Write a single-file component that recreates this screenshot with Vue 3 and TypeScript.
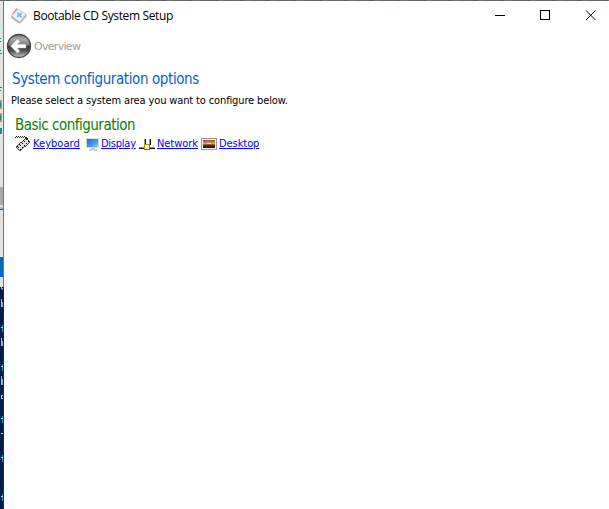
<script setup lang="ts">
interface Area { id: string; label: string }

const areas: Area[] = [
  { id: 'keyboard', label: 'Keyboard' },
  { id: 'display', label: 'Display' },
  { id: 'network', label: 'Network' },
  { id: 'desktop', label: 'Desktop' },
]
const diagonals = [0, 2, 4, 6, 8]
const consoleMarks = [329, 368, 420, 459, 498]
</script>

<template>
  <div class="screen">
    <div class="top-strip"></div>
    <div class="body">
      <svg class="backdrop" viewBox="0 0 4 508" width="4" height="508" shape-rendering="crispEdges">
        <rect width="4" height="508" fill="#e4e4e2" />
        <path d="M0 23h1v5H0z" fill="#b5eeee" />
        <path d="M0 37h1v1H0zM0 40h1v1H0zM0 49h1v1H0zM0 52h2v1H0zM0 86h2v1H0zM0 89h1v1H0z" fill="#16894c" />
        <path d="M0 99h2v9H0zM0 112h2v9H0z" fill="#c99342" />
        <path d="M0 101h1v5H0zM0 114h1v5H0zM0 127h1v6H0z" fill="#168c96" />
        <path d="M1 127h1v6H1z" fill="#397fa0" />
        <rect y="186" width="4" height="18" fill="#aaa9a7" />
        <rect y="206" width="4" height="2" fill="#9bbddb" />
        <rect y="208" width="4" height="1" fill="#304d79" />
        <rect y="256" width="4" height="20" fill="#0867ba" />
        <rect y="286" width="4" height="222" fill="#001c4b" />
        <path d="M1 286h1v2H1zM1 298h1v8H1zM1 337h1v8H1zM1 375h1v9H1z" fill="#e2ac82" />
        <path d="M2 287h1v2H2zM2 301h1v5H2zM2 340h1v5H2zM2 378h1v6H2z" fill="#8baac5" />
        <path d="M1 394h2v1H1zM1 397h2v1H1zM1 432h2v1H1z" fill="#bbcdf0" />
        <rect x="1" y="394" width="1" height="4" fill="#d9c9b3" />
        <g v-for="y in consoleMarks" :key="y">
          <rect x="2" :y="y - 5" width="1" height="7" fill="#149bc0" />
          <rect x="1" :y="y - 3" width="2" height="1" fill="#9edcec" />
          <rect x="3" :y="y + 1" width="1" height="1" fill="#2884b0" />
        </g>
        <rect x="3" width="1" height="286" fill="#747474" />
        <rect x="3" y="286" width="1" height="222" fill="#182b4b" />
      </svg>

      <main class="window">
        <header class="titlebar">
          <svg class="app-icon" width="18" height="18" viewBox="0 0 18 18">
            <path d="M1 10 6 2.5 16 7l1 2-7 7.5-2-.5-7-5z" fill="#b5b5b5" />
            <path d="M1.5 8.5 6.5 1.5 16 7l-6.5 8z" fill="#f4f4f4" stroke="#c6c6c6" stroke-width=".8" />
            <path d="m2 7 4-5.2 2 .5-5 5.5z" fill="#cc9b8b" />
            <path d="m7.5 5.5 4 5M11.8 6 7 10" stroke="#62c4f3" stroke-width="1.7" />
          </svg>
          <h1 class="title">Bootable CD System Setup</h1>
          <svg class="controls" width="138" height="29" viewBox="0 0 138 29" fill="none" stroke="#000">
            <path d="M24 14.5h10" />
            <rect x="69.5" y="9.5" width="9" height="9" />
            <path d="m115 9.5 9.5 9.5M124.5 9.5l-9.5 9.5" stroke-width="1" />
          </svg>
        </header>

        <nav class="crumbs">
          <svg width="26" height="26" viewBox="0 0 26 26">
            <defs>
              <linearGradient id="back-fill" x1="0" y1="0" x2="0" y2="1">
                <stop offset="0" stop-color="#777" /><stop offset=".2" stop-color="#aaa" />
                <stop offset=".47" stop-color="#777" /><stop offset=".5" stop-color="#333" />
                <stop offset=".72" stop-color="#555" /><stop offset="1" stop-color="#ccc" />
              </linearGradient>
            </defs>
            <circle cx="13" cy="13" r="11.5" fill="url(#back-fill)" stroke="#424242" stroke-width="1.3" />
            <path d="M4.5 13 11.5 6.2l2.4 2.3-2.5 2.8H20v3.8h-8.6l2.5 2.8-2.4 2.3z" fill="#fff" stroke="#bbb" stroke-width=".5" />
          </svg>
          <span class="crumb">Overview</span>
        </nav>

        <h2 class="heading">System configuration options</h2>
        <p class="intro">Please select a system area you want to configure below.</p>
        <h3 class="group">Basic configuration</h3>
        <div class="areas">
          <div v-for="area in areas" :key="area.id" class="area" :class="area.id">
            <svg v-if="area.id === 'keyboard'" width="16" height="16" viewBox="0 0 16 16" shape-rendering="crispEdges">
              <path d="M0 1.5h11M1 .5h10" stroke="#222" stroke-dasharray="1 1" />
              <path d="M11 1h1v1h-1zM12 2h1v1h-1z" />
              <path d="M1 11 11 2l4 4L5 15z" fill="#ddd" stroke="#222" stroke-width=".8" />
              <path v-for="d in diagonals" :key="d" :d="`M${2 + d} ${10 - d}l4 4`" stroke="#111" stroke-dasharray="1 1" stroke-width="1.4" />
            </svg>
            <svg v-else-if="area.id === 'display'" width="16" height="16" viewBox="0 0 16 16">
              <defs><linearGradient id="screen-fill" x1="0" y1="0" x2="1" y2="1"><stop stop-color="#1769c2" /><stop offset=".6" stop-color="#4c9be7" /><stop offset="1" stop-color="#9ed2fa" /></linearGradient></defs>
              <rect x="2.5" y="2.5" width="12" height="9" fill="url(#screen-fill)" stroke="#d1d9e1" />
              <path d="M7 12h4v1h2v2H5v-2h2z" fill="#bac5cf" />
              <path d="M6 14h6" stroke="#e8edf1" />
            </svg>
            <svg v-else-if="area.id === 'network'" width="16" height="16" viewBox="0 0 16 16" shape-rendering="crispEdges">
              <path d="M5 3h1v8H5zM10 3h1v6h-1zM0 11h16v1H0z" fill="#999" />
              <path d="M6 3h1v8H6zM11 3h1v6h-1zM0 12h16v1H0z" fill="#111" />
              <rect x="5.5" y="8.5" width="5" height="5" fill="#fffbb5" stroke="#9c9c12" />
              <path d="M10 8h1v6H5v-1h5z" fill="#77770a" />
            </svg>
            <svg v-else width="16" height="16" viewBox="0 0 16 16">
              <defs><linearGradient id="sunset" x1="0" y1="0" x2="0" y2="1"><stop stop-color="#98542b" /><stop offset=".5" stop-color="#f2a45d" /><stop offset=".6" stop-color="#603218" /><stop offset="1" stop-color="#21120e" /></linearGradient></defs>
              <rect x=".5" y="2.5" width="15" height="11" fill="#fff" stroke="#999" />
              <rect x="2" y="4" width="12" height="8" fill="url(#sunset)" />
              <path d="M6 7h4v1H6z" fill="#ffe4a1" />
            </svg>
            <a href="#">{{ area.label }}</a>
          </div>
        </div>
      </main>
    </div>
  </div>
</template>

<style>
body { margin: 0; overflow: hidden; }
</style>

<style scoped>
.screen { width: 609px; height: 509px; display: flex; flex-direction: column; overflow: hidden; background: #fff; font-family: "DejaVu Sans Condensed", "DejaVu Sans", sans-serif; font-stretch: condensed; }
.top-strip { height: 1px; background: repeating-linear-gradient(90deg, #666 0 7px, #46685a 7px 10px, #747474 10px 17px, #766747 17px 20px, #5c6c72 20px 26px); }
.body { display: flex; flex: 1; }
.backdrop { flex: none; display: block; }
.window { flex: 1; min-width: 0; background: #fff; }
h1, h2, h3, p { margin: 0; font-weight: 400; white-space: nowrap; }
.titlebar { height: 29px; display: flex; align-items: center; }
.app-icon { margin-left: 6px; flex: none; }
.title { margin-left: 5px; font: 12px/18px "Open Sans", sans-serif; letter-spacing: -.36px; color: #000; }
.controls { margin-left: auto; }
.crumbs { height: 32px; display: flex; align-items: center; padding-left: 2px; gap: 2px; }
.crumb { padding-top: 1px; font: 11px/14px "DejaVu Sans", sans-serif; letter-spacing: -.7px; color: #a0a0a0; }
.heading { padding: 7px 0 0 8px; font-size: 15px; line-height: 20px; letter-spacing: -.4px; color: #0563cc; }
.intro { padding: 4px 0 0 7px; font-size: 11px; line-height: 16px; letter-spacing: -.13px; color: #000; }
.group { padding: 6px 0 0 11px; font-size: 15px; line-height: 20px; letter-spacing: -.5px; color: #078007; }
.areas { display: flex; align-items: center; height: 18px; padding-left: 11px; }
.area { display: flex; align-items: center; gap: 2px; flex: none; }
.area svg { flex: none; }
.keyboard { width: 69px; }
.keyboard a { letter-spacing: .05px; }
.display { width: 55px; gap: 1px; }
.display a { letter-spacing: -.25px; }
.network { width: 62px; }
a { font-size: 11px; line-height: 14px; letter-spacing: -.07px; color: #00f; text-decoration: underline; text-underline-offset: 1px; }
</style>
